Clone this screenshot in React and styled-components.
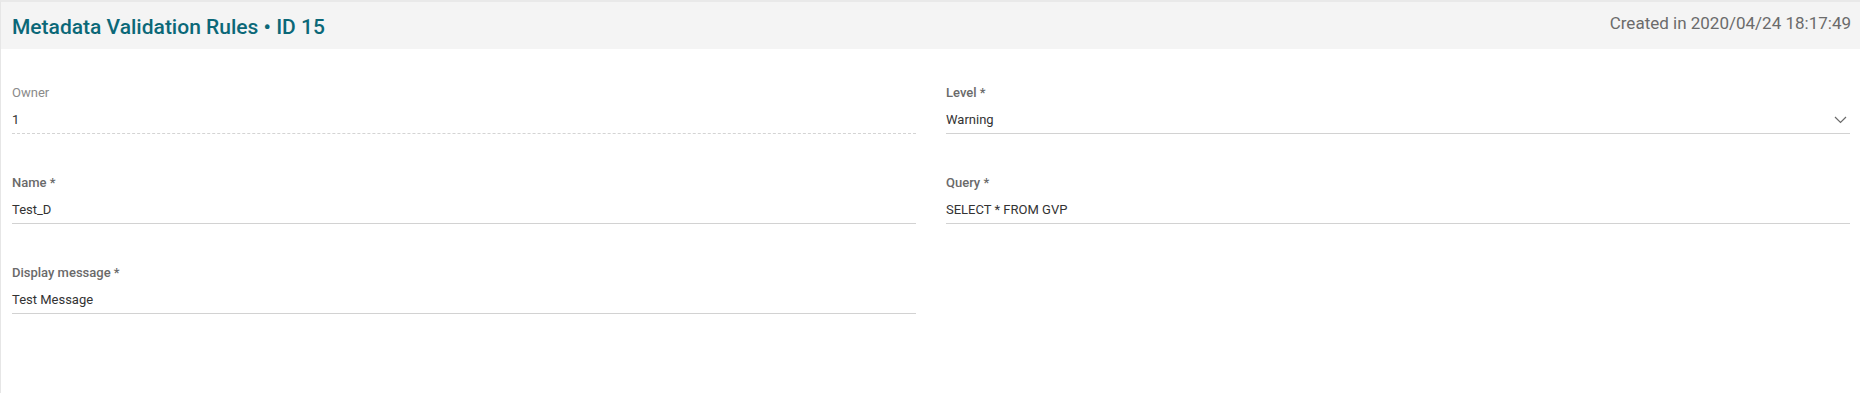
import React from "react";
import styled, { createGlobalStyle } from "styled-components";

const GlobalStyle = createGlobalStyle`
  html, body {
    margin: 0;
    padding: 0;
    background: #ffffff;
    font-family: Roboto, "Liberation Sans", Arial, sans-serif;
  }
`;

const Card = styled.section`
  width: 1860px;
  min-height: 393px;
  box-sizing: border-box;
  border-top: 2px solid #e9e9e9;
  border-left: 1px solid #e6e6e6;
  background: #fff;
`;

const Header = styled.header`
  height: 47px;
  background: #f4f4f4;
  display: flex;
  align-items: flex-start;
  justify-content: space-between;
  padding: 0 9px 0 11px;
`;

const Title = styled.h1`
  margin: 13px 0 0;
  font-size: 21px;
  line-height: 25px;
  font-weight: 500;
  color: #0b6878;
`;

const Created = styled.span`
  margin-top: 11px;
  font-size: 17px;
  line-height: 20px;
  color: #6b6b6b;
`;

const Form = styled.div`
  display: grid;
  grid-template-columns: 904px 904px;
  column-gap: 30px;
  row-gap: 41px;
  padding: 36px 0 0 11px;
`;

const Field = styled.div`
  display: flex;
  flex-direction: column;
`;

const Label = styled.label`
  font-size: 13px;
  line-height: 16px;
  font-weight: ${(p) => (p.$muted ? 400 : 500)};
  color: ${(p) => (p.$muted ? "#8a8a8a" : "#6a6a6a")};
`;

const Value = styled.div`
  margin-top: 9px;
  display: flex;
  align-items: center;
  justify-content: space-between;
  font-size: 13px;
  line-height: 20px;
  color: #333;
  padding-bottom: 3px;
  border-bottom: 1px ${(p) => (p.$readonly ? "dashed #d4d4d4" : "solid #d2d2d2")};
`;

const Chevron = () => (
  <svg width="13" height="8" viewBox="0 0 13 8" style={{ marginRight: 3 }}>
    <path d="M1 1 L6.5 6.5 L12 1" fill="none" stroke="#6a6a6a" strokeWidth="1.2" />
  </svg>
);

export default function App() {
  return (
    <>
      <GlobalStyle />
      <Card>
        <Header>
          <Title>Metadata Validation Rules • ID 15</Title>
          <Created>Created in 2020/04/24 18:17:49</Created>
        </Header>
        <Form>
          <Field>
            <Label $muted>Owner</Label>
            <Value $readonly>1</Value>
          </Field>
          <Field>
            <Label>Level *</Label>
            <Value>
              <span>Warning</span>
              <Chevron />
            </Value>
          </Field>
          <Field>
            <Label>Name *</Label>
            <Value>Test_D</Value>
          </Field>
          <Field>
            <Label>Query *</Label>
            <Value>SELECT * FROM GVP</Value>
          </Field>
          <Field>
            <Label>Display message *</Label>
            <Value>Test Message</Value>
          </Field>
        </Form>
      </Card>
    </>
  );
}
